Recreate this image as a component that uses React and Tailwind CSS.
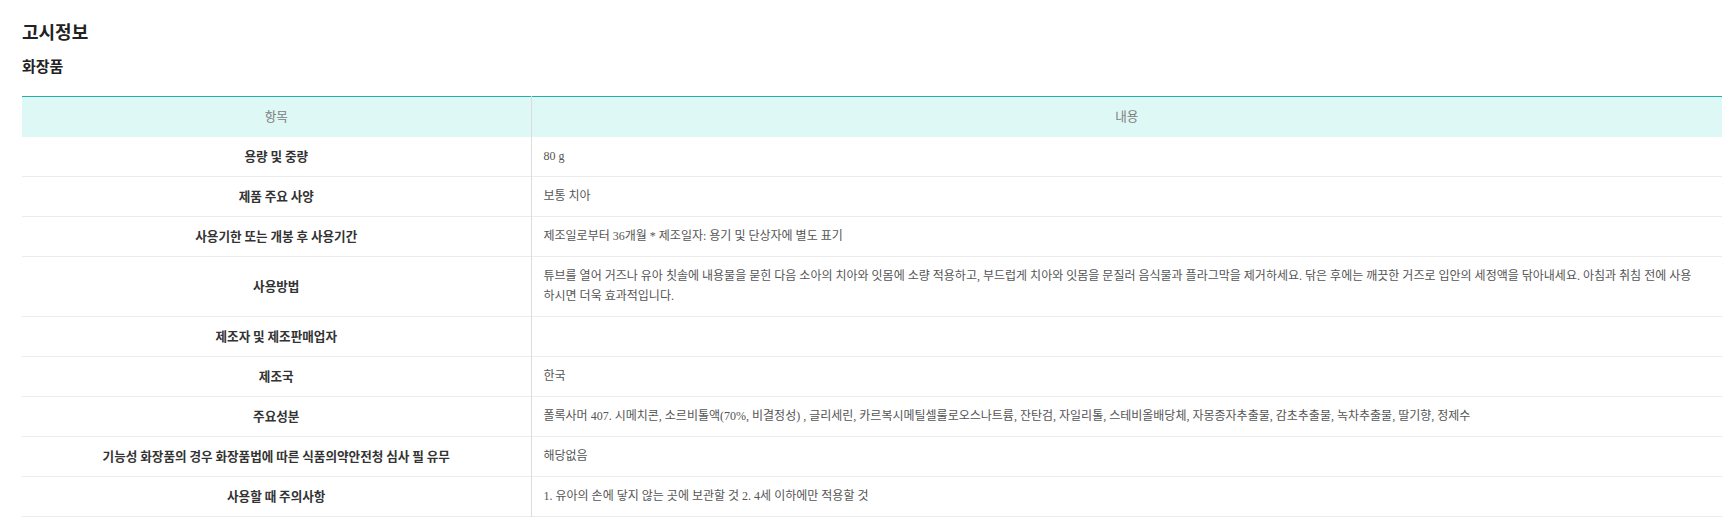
import React from 'react';

/* ─── notice rows ───────────────────────────────────────────────────────── */
const ROWS = [
  { label: '용량 및 중량', value: '80 g' },
  { label: '제품 주요 사양', value: '보통 치아' },
  { label: '사용기한 또는 개봉 후 사용기간', value: '제조일로부터 36개월 * 제조일자: 용기 및 단상자에 별도 표기' },
  {
    label: '사용방법',
    value:
      '튜브를 열어 거즈나 유아 칫솔에 내용물을 묻힌 다음 소아의 치아와 잇몸에 소량 적용하고, 부드럽게 치아와 잇몸을 문질러 음식물과 플라그막을 제거하세요. 닦은 후에는 깨끗한 거즈로 입안의 세정액을 닦아내세요. 아침과 취침 전에 사용하시면 더욱 효과적입니다.',
  },
  { label: '제조자 및 제조판매업자', value: '' },
  { label: '제조국', value: '한국' },
  {
    label: '주요성분',
    value:
      '폴록사머 407. 시메치콘, 소르비톨액(70%, 비결정성) , 글리세린, 카르복시메틸셀룰로오스나트륨, 잔탄검, 자일리톨, 스테비올배당체, 자몽종자추출물, 감초추출물, 녹차추출물, 딸기향, 정제수',
  },
  { label: '기능성 화장품의 경우 화장품법에 따른 식품의약안전청 심사 필 유무', value: '해당없음' },
  { label: '사용할 때 주의사항', value: '1. 유아의 손에 닿지 않는 곳에 보관할 것 2. 4세 이하에만 적용할 것' },
];

const SANS = { fontFamily: '"Noto Sans CJK KR", "Noto Sans", sans-serif' };
const MIXED = { fontFamily: '"Liberation Serif", "Noto Sans CJK KR", serif' };

export default function App() {
  return (
    <div className="min-h-[523px] bg-white px-[22px] pt-[17px] pr-[8px]" style={SANS}>
      {/* title */}
      <h2 className="text-[18px] font-bold leading-[28px] text-[#222]">고시정보</h2>
      <h3 className="mt-[11px] text-[15px] font-bold leading-[20px] text-[#222]">화장품</h3>

      {/* table */}
      <table className="mt-[20px] w-full border-collapse border-t border-[#20b3a3]">
        <colgroup>
          <col className="w-[509px]" />
          <col />
        </colgroup>
        <thead>
          <tr className="bg-[#ddf8f5] text-[12.6px]">
            <th className="h-[40px] border-r border-[#dcdcdc] font-normal text-[#808080]">항목</th>
            <th className="h-[40px] font-normal text-[#808080]">내용</th>
          </tr>
        </thead>
        <tbody>
          {ROWS.map((r) => (
            <tr key={r.label} className="border-b border-[#ececec]">
              <td className="border-r border-[#dcdcdc] px-3 text-center text-[12.6px] font-bold text-[#333]">
                {r.label}
              </td>
              <td className="py-[9.5px] pl-3 pr-6 text-[12px] leading-[20px] text-[#555]" style={MIXED}>
                {r.value || '\u00a0'}
              </td>
            </tr>
          ))}
        </tbody>
      </table>
    </div>
  );
}
